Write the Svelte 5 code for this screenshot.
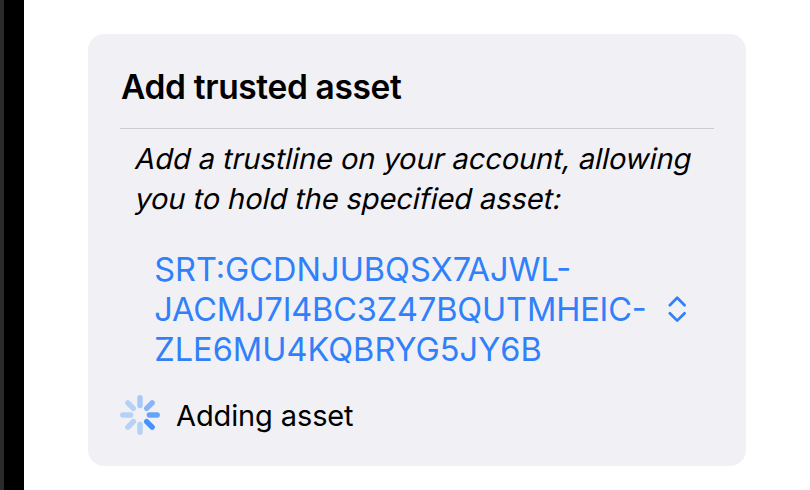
<script>
  const petals = [
    [0, '#a6c9f8'], [45, '#86b6f9'], [90, '#67a4f9'], [135, '#4791fa'],
    [180, '#b5d1f6'], [225, '#b5d1f6'], [270, '#b5d1f6'], [315, '#b5d1f6']
  ];
  const assetLines = [
    { text: 'SRT:GCDNJUBQSX7AJWL-', width: 417 },
    { text: 'JACMJ7I4BC3Z47BQUTMHEIC-', width: 492.5 },
    { text: 'ZLE6MU4KQBRYG5JY6B', width: 387.5 }
  ];
</script>

<main>
  <div class="edge"></div>
  <section class="card">
    <h1>Add trusted asset</h1>
    <p class="description">
      <span>Add a trustline on your account, allowing</span>
      <span>you to hold the specified asset:</span>
    </p>
    <div class="picker">
      <div class="asset">
        {#each assetLines as line}
          <svg width="500" height="40"><text x="-0.8" y="31.5" textLength={line.width}>{line.text}</text></svg>
        {/each}
      </div>
      <svg class="chevrons" width="20" height="28" viewBox="0 0 20 28">
        <path d="M2.8 10.2 10.2 2.8l7.4 7.4M2.8 18.2l7.4 7.4 7.4-7.4" />
      </svg>
    </div>
    <div class="status">
      <svg width="40" height="40" viewBox="-20 -20 40 40">
        {#each petals as [angle, color]}
          <line y1="-17.2" y2="-9.4" stroke={color} transform="rotate({angle})" />
        {/each}
      </svg>
      <span>Adding asset</span>
    </div>
  </section>
</main>

<style>
  :global(body) { background: #fff; }
  main { display: flex; height: 490px; overflow: hidden; font-family: Inter, sans-serif; color: #000; }
  .edge { width: 20px; border-left: 4px solid #2b2b2b; background: #000; flex: none; }
  .card { box-sizing: border-box; width: 658px; height: 432px; margin: 34px 0 0 64px; padding: 0 32px; border-radius: 16px; background: #f1f0f5; }
  h1 { margin: 0; height: 95px; padding: 33px 0 0 1px; box-sizing: border-box; font-size: 33.5px; line-height: 40px; font-weight: 600; letter-spacing: -.35px; border-bottom: 1px solid #cbcbd0; white-space: nowrap; }
  .description { margin: 0; padding: 10px 0 0 16px; font-size: 29px; line-height: 40px; letter-spacing: -.07px; white-space: nowrap; }
  .description span { display: block; width: max-content; transform: skewX(-12deg); }
  .picker { display: flex; align-items: center; margin-top: 30px; padding-left: 35px; height: 120px; }
  .asset { display: flex; flex-direction: column; width: 512px; }
  .asset svg { overflow: visible; }
  text { font-size: 32.5px; fill: #3080f9; }
  .chevrons { fill: none; stroke: #3080f9; stroke-width: 2.7; stroke-linecap: round; stroke-linejoin: round; }
  .status { display: flex; align-items: center; gap: 16px; margin-top: 26px; height: 40px; font-size: 29px; letter-spacing: -.12px; }
  .status line { stroke-width: 5.4; stroke-linecap: round; }
</style>
